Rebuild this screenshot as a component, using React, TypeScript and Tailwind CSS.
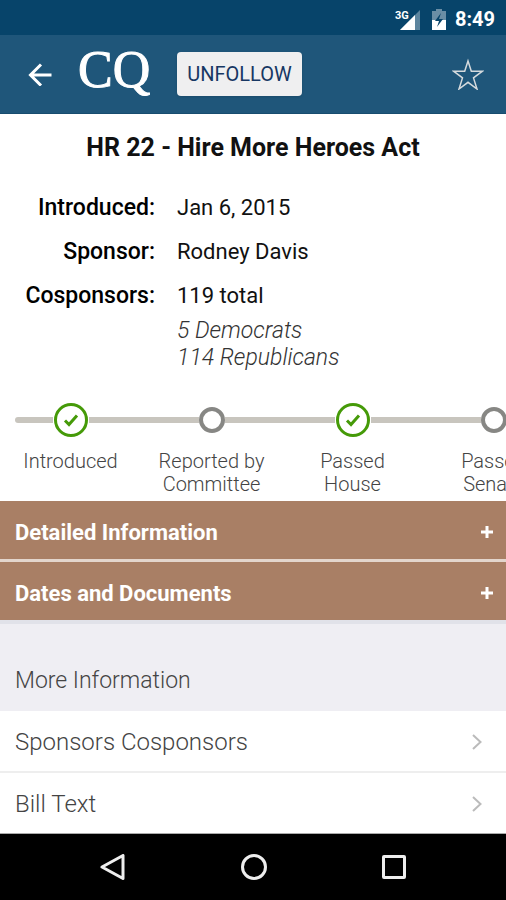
import React from 'react';

const details = [
  { label: 'Introduced:', value: 'Jan 6, 2015' },
  { label: 'Sponsor:', value: 'Rodney Davis' },
  { label: 'Cosponsors:', value: '119 total', notes: ['5 Democrats', '114 Republicans'] },
];

const steps = [
  { label: 'Introduced', done: true },
  { label: 'Reported by Committee', done: false },
  { label: 'Passed House', done: true },
  { label: 'Passed Senate', done: false },
];

const StatusBar: React.FC = () => (
  <div className="flex h-[35px] items-center justify-end bg-[#07446a] pr-[11px] text-white">
    <svg className="mt-0.5 h-6 w-7" viewBox="0 0 28 24" aria-hidden="true">
      <path d="M27 3v20H7z" fill="#fff" opacity="0.35" />
      <path d="M22 8v15H7z" fill="#fff" />
      <text x="2" y="12" className="fill-white font-['Roboto'] text-[11px] font-bold">3G</text>
    </svg>
    <svg className="ml-2.5 mt-0.5 h-6 w-4" viewBox="0 0 16 24" aria-hidden="true">
      <path d="M1 4h4V2h6v2h4v9H1z" fill="#fff" opacity="0.4" />
      <path d="M1 13h14v10H1z" fill="#fff" />
      <path d="M10 6L4 14h4l-2 6 6-8H8z" fill="#07446a" />
    </svg>
    <span className="ml-2 pt-0.5 text-[20px] leading-6 font-bold">8:49</span>
  </div>
);

const Header: React.FC = () => (
  <header className="flex h-[79px] items-center border-b border-[#174c6e] bg-[#1f567a] pr-[22px] pl-7">
    <button type="button" aria-label="Back">
      <svg className="block h-6 w-6" viewBox="0 0 24 24" fill="none" stroke="#fff" strokeWidth="3">
        <path d="M23.500 13H3M13 2.500L2.500 13L13 23.500" />
      </svg>
    </button>
    <span className="ml-[26px] pb-2 font-['Liberation_Serif',serif] text-[52px] leading-[70px] text-white [-webkit-text-stroke:1px_white]">
      CQ
    </span>
    <button
      type="button"
      className="ml-[27px] h-11 rounded bg-[#efeff0] px-2.5 text-[20px] text-[#173763] shadow-sm"
    >
      UNFOLLOW
    </button>
    <button type="button" aria-label="Add to favorites" className="ml-auto">
      <svg className="block h-8 w-8" viewBox="0 0 32 32" fill="none" stroke="#d5dadd" strokeWidth="1.5">
        <path d="M16 3l3.300 10.200H30.500l-9 6.700 3.500 11.100-9-6.700-9 6.700 3.500-11.100-9-6.700h11.200z" />
      </svg>
    </button>
  </header>
);

const Timeline: React.FC = () => (
  <div className="overflow-x-auto [scrollbar-width:none]">
    <ol className="flex">
      {steps.map((step, index) => (
        <li key={step.label} className="flex w-[141px] shrink-0 flex-col items-center">
          <div className="flex h-9 w-full items-center">
            <div className="flex-1">
              <div className={`h-1.5 bg-[#c8c5be] ${index === 0 ? 'ml-[15px] rounded-l-full' : ''}`} />
            </div>
            {step.done ? (
              <svg className="h-9 w-9" viewBox="0 0 36 36" fill="none" stroke="#459a08" strokeWidth="3">
                <circle cx="18" cy="18" r="15.500" fill="#fff" />
                <path d="M12 18.500l4 4 8-9" />
              </svg>
            ) : (
              <span className="h-[26px] w-[26px] rounded-full border-4 border-[#878784] bg-white" />
            )}
            <div className="h-1.5 flex-1 bg-[#c8c5be]" />
          </div>
          <span className="mt-3 w-[112px] text-center text-[20px] leading-[23px] font-light text-[#444]">
            {step.label}
          </span>
        </li>
      ))}
    </ol>
  </div>
);

const App: React.FC = () => {
  return (
    <div className="min-h-screen overflow-hidden bg-white font-['Roboto',sans-serif] text-[#111]">
      <StatusBar />
      <Header />

      <main>
        <h1 className="pt-[18px] text-center text-[25px] leading-8 font-bold">HR 22 - Hire More Heroes Act</h1>

        <dl className="mt-[30px] flex flex-col gap-4 text-[22px] leading-7">
          {details.map((row) => (
            <div key={row.label} className="flex gap-[22px]">
              <dt className="w-[155px] text-right text-[23px] font-medium text-black">{row.label}</dt>
              <dd>
                {row.value}
                {row.notes && (
                  <div className="mt-[7px] text-[23px] leading-[27px] font-light text-[#333] italic">
                    {row.notes.map((note) => (
                      <p key={note}>{note}</p>
                    ))}
                  </div>
                )}
              </dd>
            </div>
          ))}
        </dl>

        <div className="mt-[31px] h-[99px]">
          <Timeline />
        </div>

        {/* Collapsed sections */}
        <div className="flex flex-col gap-[3px] bg-[#e3d5cc]">
          {['Detailed Information', 'Dates and Documents'].map((title) => (
            <button
              key={title}
              type="button"
              className="flex h-[58px] w-full items-center justify-between bg-[#a97f65] pt-1 pr-[13px] pl-[15px] text-[22px] font-bold text-white"
            >
              {title}
              <svg className="h-3 w-3" viewBox="0 0 12 12" stroke="#fff" strokeWidth="3">
                <path d="M6 0v12M0 6h12" />
              </svg>
            </button>
          ))}
        </div>

        <h2 className="h-[91px] border-t-4 border-[#e1e2e9] bg-[#efeef3] pt-[43px] pl-[15px] text-[23px] leading-7 font-light text-[#444]">
          More Information
        </h2>
        <nav>
          {['Sponsors Cosponsors', 'Bill Text'].map((item) => (
            <a
              key={item}
              href="#"
              className="flex h-[62px] items-center justify-between border-b-2 border-[#eee] pt-0.5 pr-6 pl-[15px] text-[24px] font-light text-[#444] last:h-[61px] last:border-b last:border-[#aaa]"
            >
              {item}
              <svg className="h-4 w-2.5" viewBox="0 0 10 16" fill="none" stroke="#bbb" strokeWidth="2">
                <path d="M1 1l7.500 7L1 15" />
              </svg>
            </a>
          ))}
        </nav>
      </main>

      {/* Android navigation */}
      <footer className="flex h-[67px] items-center justify-center gap-[115px] bg-black pb-0.5">
        <button type="button" aria-label="Back">
          <svg className="block h-[26px] w-[26px]" viewBox="0 0 26 26" fill="none" stroke="#eee" strokeWidth="3">
            <path d="M23 1.500v23L2 13z" strokeLinejoin="round" />
          </svg>
        </button>
        <button type="button" aria-label="Home">
          <span className="block h-[26px] w-[26px] rounded-full border-3 border-[#eee]" />
        </button>
        <button type="button" aria-label="Recent apps">
          <span className="block h-6 w-6 rounded-xs border-3 border-[#eee]" />
        </button>
      </footer>
    </div>
  );
};

export default App;
